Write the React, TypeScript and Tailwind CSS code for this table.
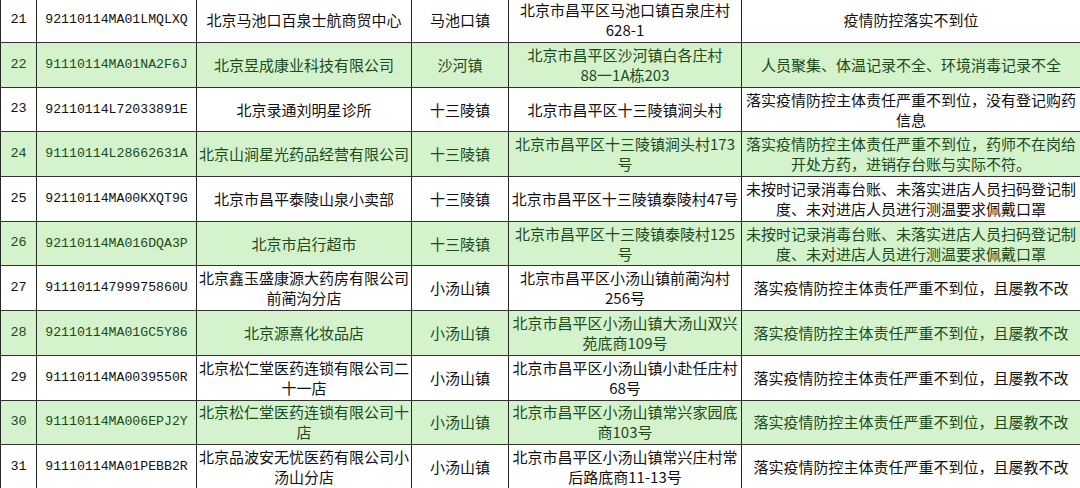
type Row = {
  no: string
  code: string
  name: string[]
  town: string
  addr: string[]
  issue: string[]
}

const ISSUE_A = ["未按时记录消毒台账、未落实进店人员扫码登记制", "度、未对进店人员进行测温要求佩戴口罩"]
const ISSUE_B = ["落实疫情防控主体责任严重不到位，且屡教不改"]

const rows: Row[] = [
  { no: "21", code: "92110114MA01LMQLXQ", name: ["北京马池口百泉士航商贸中心"], town: "马池口镇", addr: ["北京市昌平区马池口镇百泉庄村", "628-1"], issue: ["疫情防控落实不到位"] },
  { no: "22", code: "91110114MA01NA2F6J", name: ["北京昱成康业科技有限公司"], town: "沙河镇", addr: ["北京市昌平区沙河镇白各庄村", "88一1A栋203"], issue: ["人员聚集、体温记录不全、环境消毒记录不全"] },
  { no: "23", code: "92110114L72033891E", name: ["北京录通刘明星诊所"], town: "十三陵镇", addr: ["北京市昌平区十三陵镇涧头村"], issue: ["落实疫情防控主体责任严重不到位，没有登记购药", "信息"] },
  { no: "24", code: "91110114L28662631A", name: ["北京山涧星光药品经营有限公司"], town: "十三陵镇", addr: ["北京市昌平区十三陵镇涧头村173", "号"], issue: ["落实疫情防控主体责任严重不到位，药师不在岗给", "开处方药，进销存台账与实际不符。"] },
  { no: "25", code: "92110114MA00KXQT9G", name: ["北京市昌平泰陵山泉小卖部"], town: "十三陵镇", addr: ["北京市昌平区十三陵镇泰陵村47号"], issue: ISSUE_A },
  { no: "26", code: "92110114MA016DQA3P", name: ["北京市启行超市"], town: "十三陵镇", addr: ["北京市昌平区十三陵镇泰陵村125", "号"], issue: ISSUE_A },
  { no: "27", code: "91110114799975860U", name: ["北京鑫玉盛康源大药房有限公司", "前蔺沟分店"], town: "小汤山镇", addr: ["北京市昌平区小汤山镇前蔺沟村", "256号"], issue: ISSUE_B },
  { no: "28", code: "92110114MA01GC5Y86", name: ["北京源熹化妆品店"], town: "小汤山镇", addr: ["北京市昌平区小汤山镇大汤山双兴", "苑底商109号"], issue: ISSUE_B },
  { no: "29", code: "91110114MA0039550R", name: ["北京松仁堂医药连锁有限公司二", "十一店"], town: "小汤山镇", addr: ["北京市昌平区小汤山镇小赴任庄村", "68号"], issue: ISSUE_B },
  { no: "30", code: "91110114MA006EPJ2Y", name: ["北京松仁堂医药连锁有限公司十", "店"], town: "小汤山镇", addr: ["北京市昌平区小汤山镇常兴家园底", "商103号"], issue: ISSUE_B },
  { no: "31", code: "91110114MA01PEBB2R", name: ["北京品波安无忧医药有限公司小", "汤山分店"], town: "小汤山镇", addr: ["北京市昌平区小汤山镇常兴庄村常", "后路底商11-13号"], issue: ISSUE_B },
]

const cjk = "font-['Noto_Sans_CJK_SC',sans-serif] text-[15px] leading-[20px]"
const mono = "font-['Liberation_Mono','Noto_Sans_CJK_SC',monospace] text-[13.2px]"

function Lines({ lines }: { lines: string[] }) {
  return (
    <div className="flex flex-col items-center">
      {lines.map((l, i) => (
        <span key={i} className="whitespace-nowrap">
          {l}
        </span>
      ))}
    </div>
  )
}

function Cell({ children, className = "" }: { children: React.ReactNode; className?: string }) {
  return (
    <div className={`flex items-center justify-center overflow-hidden border-r border-[#262626] text-center ${className}`}>
      {children}
    </div>
  )
}

export default function App() {
  return (
    <div className="h-[488px] w-[1080px] overflow-hidden bg-white">
      <div className="mt-[-1.7px]">
        {rows.map((r, idx) => {
          const green = idx % 2 === 1
          return (
            <div
              key={r.no}
              className={`grid h-[44.7px] grid-cols-[37px_160px_215px_97px_233px_338px] border-b border-[#333333] ${
                green ? "bg-[#d4f3cd] text-[#1c4a1c]" : "bg-white text-[#111111]"
              }`}
            >
              <Cell className={`border-l ${mono} text-[13.5px]`}>{r.no}</Cell>
              <Cell className={mono}>{r.code}</Cell>
              <Cell className={cjk}>
                <Lines lines={r.name} />
              </Cell>
              <Cell className={cjk}>{r.town}</Cell>
              <Cell className={cjk}>
                <Lines lines={r.addr} />
              </Cell>
              <Cell className={`${cjk} border-r-0`}>
                <Lines lines={r.issue} />
              </Cell>
            </div>
          )
        })}
      </div>
    </div>
  )
}
